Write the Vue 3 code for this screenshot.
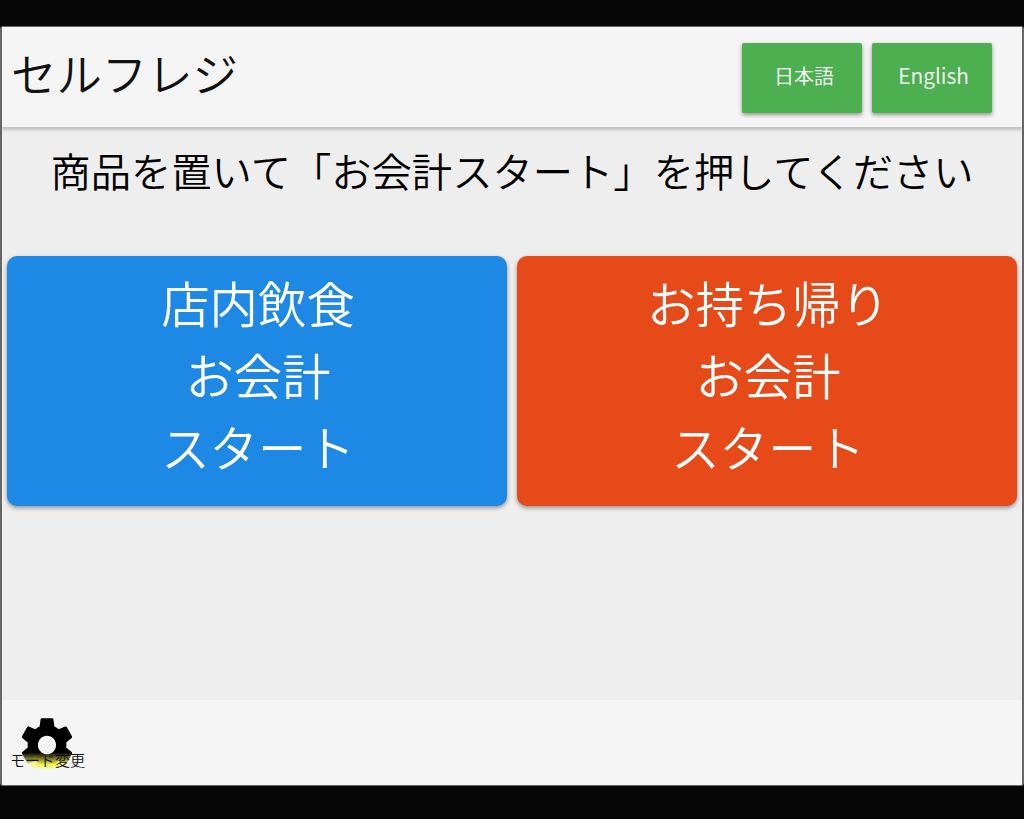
<script setup>
const startButtons = [
  { id: 'eatin', lines: ['店内飲食', 'お会計', 'スタート'], color: 'blue' },
  { id: 'takeout', lines: ['お持ち帰り', 'お会計', 'スタート'], color: 'orange' }
]
</script>

<template>
  <div class="screen">
    <div class="window">
      <header class="toolbar">
        <div class="title">セルフレジ</div>
        <div class="lang">
          <button class="lang-btn">日本語</button>
          <button class="lang-btn">English</button>
        </div>
      </header>
      <main class="content">
        <div class="message">商品を置いて「お会計スタート」を押してください</div>
        <div class="starts">
          <button v-for="b in startButtons" :key="b.id" class="start" :class="b.color">
            <span v-for="line in b.lines" :key="line">{{ line }}</span>
          </button>
        </div>
      </main>
      <footer class="footer">
        <div class="mode">
          <span class="glow"></span>
          <svg class="gear" viewBox="0 0 24 24" width="62" height="64" preserveAspectRatio="none">
            <defs>
              <!-- bottom of the gear melts into a yellow highlight -->
              <linearGradient id="gearFill" gradientUnits="userSpaceOnUse" x1="0" y1="14.8" x2="0" y2="21.4">
                <stop offset="0" stop-color="#000" />
                <stop offset="0.7" stop-color="#f6f650" />
                <stop offset="1" stop-color="#f5f5f5" />
              </linearGradient>
            </defs>
            <path fill="url(#gearFill)" d="M19.43 12.98c.04-.32.07-.64.07-.98s-.03-.66-.07-.98l2.11-1.65c.19-.15.24-.42.12-.64l-2-3.46c-.12-.22-.39-.3-.61-.22l-2.49 1c-.52-.4-1.08-.73-1.69-.98l-.38-2.65C14.46 2.18 14.25 2 14 2h-4c-.25 0-.46.18-.49.42l-.38 2.65c-.61.25-1.17.59-1.69.98l-2.49-1c-.23-.09-.49 0-.61.22l-2 3.46c-.13.22-.07.49.12.64l2.11 1.65c-.04.32-.07.65-.07.98s.03.66.07.98l-2.11 1.65c-.19.15-.24.42-.12.64l2 3.46c.12.22.39.3.61.22l2.49-1c.52.4 1.08.73 1.69.98l.38 2.65c.03.24.24.42.49.42h4c.25 0 .46-.18.49-.42l.38-2.65c.61-.25 1.17-.59 1.69-.98l2.49 1c.23.09.49 0 .61-.22l2-3.46c.12-.22.07-.49-.12-.64l-2.11-1.65zM12 15.5c-1.93 0-3.5-1.57-3.5-3.5s1.57-3.5 3.5-3.5 3.5 1.57 3.5 3.5-1.57 3.5-3.5 3.5z"/>
          </svg>
          <span class="mode-label">モード変更</span>
        </div>
      </footer>
    </div>
  </div>
</template>

<style>
html, body {
  margin: 0;
  background: #000;
}
</style>

<style scoped>
.screen {
  height: 819px;
  box-sizing: border-box;
  padding: 26px 0 33px;
  background: #060606;
  font-family: "Noto Sans CJK JP", "Noto Sans", sans-serif;
  font-weight: 350;
}
.window {
  height: 100%;
  box-sizing: border-box;
  border: 2px solid #666;
  border-width: 1px 2px;
  border-radius: 3px;
  display: flex;
  flex-direction: column;
  background: #eee;
  overflow: hidden;
}
.toolbar {
  height: 100px;
  flex: none;
  display: flex;
  align-items: center;
  justify-content: space-between;
  background: #f5f5f5;
  box-shadow: 0 3px 3px rgba(0, 0, 0, 0.2);
  padding: 0 30px 0 9px;
  position: relative;
}
.title {
  font-size: 45.4px;
  color: #111;
  padding-bottom: 10px;
}
.lang {
  display: flex;
  gap: 10px;
  margin-top: 2px;
}
.lang-btn {
  width: 120px;
  height: 70px;
  border: none;
  border-radius: 2px;
  background: #4caf50;
  color: #fff;
  font-family: inherit;
  font-weight: 350;
  font-size: 20px;
  padding: 0 0 6px 4px;
  box-shadow: 0 2px 4px rgba(0, 0, 0, 0.4);
}
.lang-btn:last-child {
  font-size: 21px;
  padding-left: 3px;
}
.content {
  flex: 1;
  display: flex;
  flex-direction: column;
}
.message {
  margin-top: 18px;
  height: 50px;
  line-height: 50px;
  text-align: center;
  font-size: 40.3px;
  color: #000;
}
.starts {
  margin-top: 61px;
  padding: 0 5px;
  display: grid;
  grid-template-columns: 1fr 1fr;
  gap: 10px;
}
.start {
  height: 250px;
  border: none;
  border-radius: 10px;
  color: #fff;
  font-family: inherit;
  font-weight: 350;
  font-size: 48.4px;
  line-height: 72px;
  padding: 0 0 14px 2px;
  display: flex;
  flex-direction: column;
  align-items: center;
  justify-content: center;
  box-shadow: 0 2px 4px rgba(0, 0, 0, 0.4);
}
.blue {
  background: #1e88e5;
}
.orange {
  background: #e64a19;
}
.footer {
  height: 85px;
  flex: none;
  background: #f5f5f5;
}
.mode {
  position: relative;
  width: 80px;
  height: 85px;
  margin-left: 6px;
}
.glow {
  position: absolute;
  left: 17px;
  top: 54px;
  width: 44px;
  height: 16px;
  border-radius: 50%;
  background: radial-gradient(closest-side, #f6f650 50%, rgba(246, 246, 80, 0));
}
.gear {
  position: absolute;
  left: 8px;
  top: 13px;
}
.mode-label {
  position: absolute;
  left: 2px;
  top: 50px;
  font-size: 15px;
  line-height: 20px;
  white-space: nowrap;
  color: #111;
}
</style>
